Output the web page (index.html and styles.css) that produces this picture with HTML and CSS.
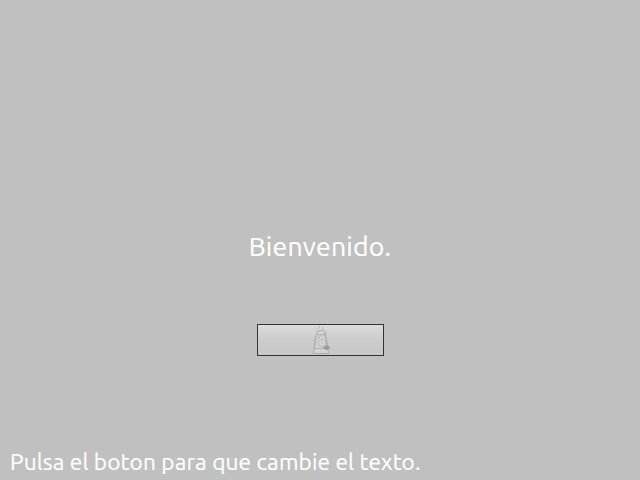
FILE: index.html
```
<!DOCTYPE html>
<html lang="es">
<head>
<meta charset="utf-8">
<title>Bienvenido</title>
<link rel="stylesheet" href="styles.css">
</head>
<body>
<main class="screen">
  <h1 class="title">Bienvenido.</h1>
  <button class="button" type="button" aria-label="Cambiar texto">
    <svg class="icon" width="18" height="30" viewBox="0 0 18 30" fill="none" stroke="#a2a2a2" stroke-width=".8">
      <path d="M3 2.500l1 1M8 .5l-1 3M4 5l1 .5M10 3.500l2-1" stroke="#aaa"/>
      <path d="M4.500 9l8-1.500 3.500 16H2L3.500 11z" fill="#d0d0d0" stroke="#b0b0b0"/>
      <path d="M5 9.500l.5-3 5-1.500 3 1.500-1 3-4 .5z" fill="#d4d4d4"/>
      <path d="M13 7.500l2 10.500 1 7M4 11l-.5 6L2 23.500M6 13l2-1"/>
      <circle cx="10" cy="18" r="3.400" fill="#d8d8d8" stroke="#b0b0b0"/>
      <circle cx="10" cy="18" r=".8" fill="#aaa" stroke="none"/>
      <path d="M2.500 23.500L1 28.500h15.500l-.5-4-4-1z" fill="#d2d2d2" stroke="#a8a8a8"/>
      <path d="M11 22.500l3-2 3.500 .5v2.500l-2.500 1.500-2-.5z" fill="#999" stroke="none"/>
    </svg>
  </button>
  <p class="hint">Pulsa el boton para que cambie el texto.</p>
</main>
</body>
</html>
```
FILE: styles.css
```
body {
  margin: 0;
  background: #c0c0c0;
  color: #fff;
  font-family: Ubuntu, "Noto Sans", sans-serif;
  -webkit-text-stroke: .2px #fff;
}
.screen {
  box-sizing: border-box;
  height: 480px;
  padding: 228px 0 3px;
  display: flex;
  flex-direction: column;
  align-items: center;
}
.title {
  margin: 0 0 60px;
  font-size: 26.667px;
  letter-spacing: .2px;
  line-height: 36px;
  font-weight: 400;
  white-space: nowrap;
}
.button {
  box-sizing: border-box;
  width: 127px;
  height: 32px;
  margin-left: 1px;
  padding: 0;
  display: flex;
  justify-content: center;
  align-items: center;
  border: 1px solid #333;
  border-radius: 0;
  background: linear-gradient(#dcdcdc, #cbcbcb 50%, #c8c8c8);
}
.icon {
  display: block;
}
.hint {
  align-self: flex-start;
  margin: auto 0 0 10px;
  font-size: 22.667px;
  letter-spacing: .12px;
  line-height: 30px;
  white-space: nowrap;
}
```
